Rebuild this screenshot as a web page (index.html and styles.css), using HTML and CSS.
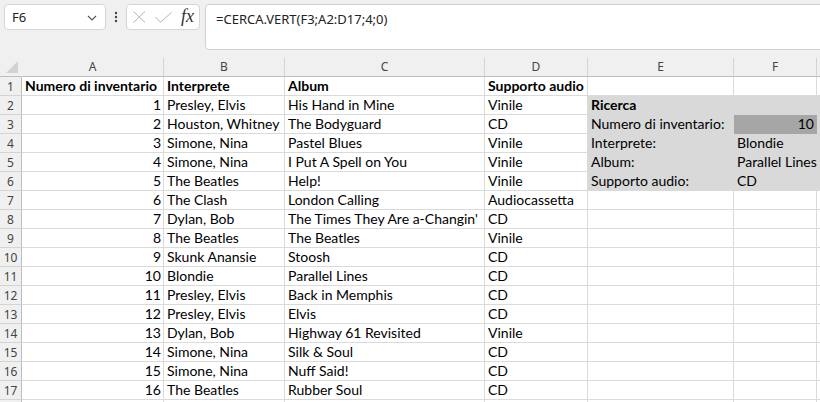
FILE: index.html
```html
<!DOCTYPE html>
<html lang="it">
<head>
    <meta charset="UTF-8">
    <title>Cerca.vert</title>
    <link rel="stylesheet" href="styles.css">
</head>
<body>
    <div class="toolbar">
        <div class="namebox">
            <span>F6</span>
            <svg class="chevron" width="10" height="6" viewBox="0 0 10 6"><polyline points="1,1 5,5 9,1" fill="none" stroke="#555" stroke-width="1.1"/></svg>
        </div>
        <div class="dots">
            <svg width="4" height="12" viewBox="0 0 4 12"><circle cx="2" cy="2" r="1.2" fill="#444"/><circle cx="2" cy="6" r="1.2" fill="#444"/><circle cx="2" cy="10" r="1.2" fill="#444"/></svg>
        </div>
        <div class="fxbox">
            <svg width="13" height="12" viewBox="0 0 13 12"><path d="M0.5 0.5 L12 11.5 M12 0.5 L0.5 11.5" stroke="#b5b5b5" stroke-width="1" fill="none"/></svg>
            <svg width="17" height="11" viewBox="0 0 17 11"><polyline points="0.5,5 5.5,10.2 16.5,0.5" stroke="#b5b5b5" stroke-width="1" fill="none"/></svg>
            <span class="fx">fx</span>
        </div>
        <div class="formula">=CERCA.VERT(F3;A2:D17;4;0)</div>
    </div>

    <div class="sheet">
        <div class="corner"><svg width="12" height="12" viewBox="0 0 12 12"><polygon points="12,0 12,12 0,12" fill="#d2d2d2"/></svg></div>
        <div class="colhdr">A</div>
        <div class="colhdr">B</div>
        <div class="colhdr">C</div>
        <div class="colhdr">D</div>
        <div class="colhdr">E</div>
        <div class="colhdr">F</div>
        <div class="colhdr last"></div>

        <div class="rowhdr">1</div>
        <div class="cell bold">Numero di inventario</div>
        <div class="cell bold">Interprete</div>
        <div class="cell bold">Album</div>
        <div class="cell bold">Supporto audio</div>
        <div class="cell"></div>
        <div class="cell"></div>
        <div class="cell"></div>

        <div class="rowhdr">2</div>
        <div class="cell num">1</div>
        <div class="cell">Presley, Elvis</div>
        <div class="cell">His Hand in Mine</div>
        <div class="cell">Vinile</div>
        <div class="cell fill bold">Ricerca</div>
        <div class="cell fill"></div>
        <div class="cell fill"></div>

        <div class="rowhdr">3</div>
        <div class="cell num">2</div>
        <div class="cell">Houston, Whitney</div>
        <div class="cell">The Bodyguard</div>
        <div class="cell">CD</div>
        <div class="cell fill">Numero di inventario:</div>
        <div class="cell dark num">10</div>
        <div class="cell fill"></div>

        <div class="rowhdr">4</div>
        <div class="cell num">3</div>
        <div class="cell">Simone, Nina</div>
        <div class="cell">Pastel Blues</div>
        <div class="cell">Vinile</div>
        <div class="cell fill">Interprete:</div>
        <div class="cell fill">Blondie</div>
        <div class="cell fill"></div>

        <div class="rowhdr">5</div>
        <div class="cell num">4</div>
        <div class="cell">Simone, Nina</div>
        <div class="cell">I Put A Spell on You</div>
        <div class="cell">Vinile</div>
        <div class="cell fill">Album:</div>
        <div class="cell fill">Parallel Lines</div>
        <div class="cell fill"></div>

        <div class="rowhdr">6</div>
        <div class="cell num">5</div>
        <div class="cell">The Beatles</div>
        <div class="cell">Help!</div>
        <div class="cell">Vinile</div>
        <div class="cell fill">Supporto audio:</div>
        <div class="cell fill">CD</div>
        <div class="cell fill"></div>

        <div class="rowhdr">7</div>
        <div class="cell num">6</div>
        <div class="cell">The Clash</div>
        <div class="cell">London Calling</div>
        <div class="cell">Audiocassetta</div>
        <div class="cell"></div>
        <div class="cell"></div>
        <div class="cell"></div>

        <div class="rowhdr">8</div>
        <div class="cell num">7</div>
        <div class="cell">Dylan, Bob</div>
        <div class="cell">The Times They Are a-Changin'</div>
        <div class="cell">CD</div>
        <div class="cell"></div>
        <div class="cell"></div>
        <div class="cell"></div>

        <div class="rowhdr">9</div>
        <div class="cell num">8</div>
        <div class="cell">The Beatles</div>
        <div class="cell">The Beatles</div>
        <div class="cell">Vinile</div>
        <div class="cell"></div>
        <div class="cell"></div>
        <div class="cell"></div>

        <div class="rowhdr">10</div>
        <div class="cell num">9</div>
        <div class="cell">Skunk Anansie</div>
        <div class="cell">Stoosh</div>
        <div class="cell">CD</div>
        <div class="cell"></div>
        <div class="cell"></div>
        <div class="cell"></div>

        <div class="rowhdr">11</div>
        <div class="cell num">10</div>
        <div class="cell">Blondie</div>
        <div class="cell">Parallel Lines</div>
        <div class="cell">CD</div>
        <div class="cell"></div>
        <div class="cell"></div>
        <div class="cell"></div>

        <div class="rowhdr">12</div>
        <div class="cell num">11</div>
        <div class="cell">Presley, Elvis</div>
        <div class="cell">Back in Memphis</div>
        <div class="cell">CD</div>
        <div class="cell"></div>
        <div class="cell"></div>
        <div class="cell"></div>

        <div class="rowhdr">13</div>
        <div class="cell num">12</div>
        <div class="cell">Presley, Elvis</div>
        <div class="cell">Elvis</div>
        <div class="cell">CD</div>
        <div class="cell"></div>
        <div class="cell"></div>
        <div class="cell"></div>

        <div class="rowhdr">14</div>
        <div class="cell num">13</div>
        <div class="cell">Dylan, Bob</div>
        <div class="cell">Highway 61 Revisited</div>
        <div class="cell">Vinile</div>
        <div class="cell"></div>
        <div class="cell"></div>
        <div class="cell"></div>

        <div class="rowhdr">15</div>
        <div class="cell num">14</div>
        <div class="cell">Simone, Nina</div>
        <div class="cell">Silk &amp; Soul</div>
        <div class="cell">CD</div>
        <div class="cell"></div>
        <div class="cell"></div>
        <div class="cell"></div>

        <div class="rowhdr">16</div>
        <div class="cell num">15</div>
        <div class="cell">Simone, Nina</div>
        <div class="cell">Nuff Said!</div>
        <div class="cell">CD</div>
        <div class="cell"></div>
        <div class="cell"></div>
        <div class="cell"></div>

        <div class="rowhdr">17</div>
        <div class="cell num">16</div>
        <div class="cell">The Beatles</div>
        <div class="cell">Rubber Soul</div>
        <div class="cell">CD</div>
        <div class="cell"></div>
        <div class="cell"></div>
        <div class="cell"></div>

        <div class="rowhdr"></div>
        <div class="cell"></div>
        <div class="cell"></div>
        <div class="cell"></div>
        <div class="cell"></div>
        <div class="cell"></div>
        <div class="cell"></div>
        <div class="cell"></div>
    </div>
</body>
</html>
```

FILE: styles.css
```css
body {
    margin: 0;
    background-color: #f0f0f0;
    font-family: Lato, "Open Sans", sans-serif;
    overflow: hidden;
}
.toolbar {
    display: flex;
    align-items: flex-start;
    padding: 4px 0 8px 4px;
}
.namebox {
    box-sizing: border-box;
    width: 102px;
    height: 26px;
    display: flex;
    align-items: center;
    justify-content: space-between;
    padding: 0 7px 0 7px;
    background-color: #fff;
    border: 1px solid #d6d6d6;
    border-radius: 4px;
    font-family: "Noto Sans", sans-serif;
    font-size: 13px;
    color: #222;
}
.chevron {
    margin-right: 1px;
    margin-top: 2px;
}
.dots {
    width: 20px;
    height: 26px;
    display: flex;
    align-items: center;
    justify-content: center;
}
.fxbox {
    box-sizing: border-box;
    width: 74px;
    height: 26px;
    display: flex;
    align-items: center;
    gap: 9px;
    padding-left: 6px;
    background-color: #fff;
    border: 1px solid #d6d6d6;
    border-radius: 4px;
}
.fx {
    font-family: "Liberation Serif", serif;
    font-style: italic;
    font-size: 18px;
    color: #333;
    margin-top: -2px;
}
.formula {
    box-sizing: border-box;
    flex: 1;
    height: 46px;
    margin-left: 5px;
    margin-right: -6px;
    padding: 5px 10px;
    background-color: #fff;
    border: 1px solid #d0d0d0;
    border-radius: 4px 0 0 4px;
    font-family: "Noto Sans", sans-serif;
    font-size: 13px;
    line-height: 18px;
    color: #222;
}
.sheet {
    display: grid;
    grid-template-columns: 22px 142px 121px 200px 103px 146px 83px 1fr;
    grid-auto-rows: 19px;
    background-color: #fff;
}
.corner, .colhdr, .rowhdr, .cell {
    box-sizing: border-box;
    border-right: 1px solid #dadada;
    border-bottom: 1px solid #dadada;
}
.corner {
    background-color: #f0f0f0;
    border-right-color: #f0f0f0;
    border-bottom-color: #bdbdbd;
    display: flex;
    align-items: flex-end;
    justify-content: flex-end;
    padding: 0 3px 3px 0;
}
.colhdr {
    background-color: #f0f0f0;
    border-right-color: #d4d4d4;
    border-bottom-color: #bdbdbd;
    text-align: center;
    font-family: "Noto Sans", sans-serif;
    font-size: 12px;
    line-height: 18px;
    color: #444;
}
.colhdr.last {
    border-right: none;
}
.rowhdr {
    background-color: #f0f0f0;
    border-right-color: #bdbdbd;
    border-bottom-color: #d4d4d4;
    text-align: center;
    font-family: "Noto Sans", sans-serif;
    font-size: 12px;
    line-height: 19px;
    color: #444;
}
.cell {
    padding: 0 3px;
    font-size: 14px;
    line-height: 18px;
    color: #000;
    white-space: nowrap;
}
.num {
    text-align: right;
    padding-right: 2px;
}
.bold {
    font-weight: bold;
}
.fill {
    background-color: #d9d9d9;
    border-color: #d9d9d9;
}
.dark {
    background-color: #a6a6a6;
    border-color: #a6a6a6;
}
```
